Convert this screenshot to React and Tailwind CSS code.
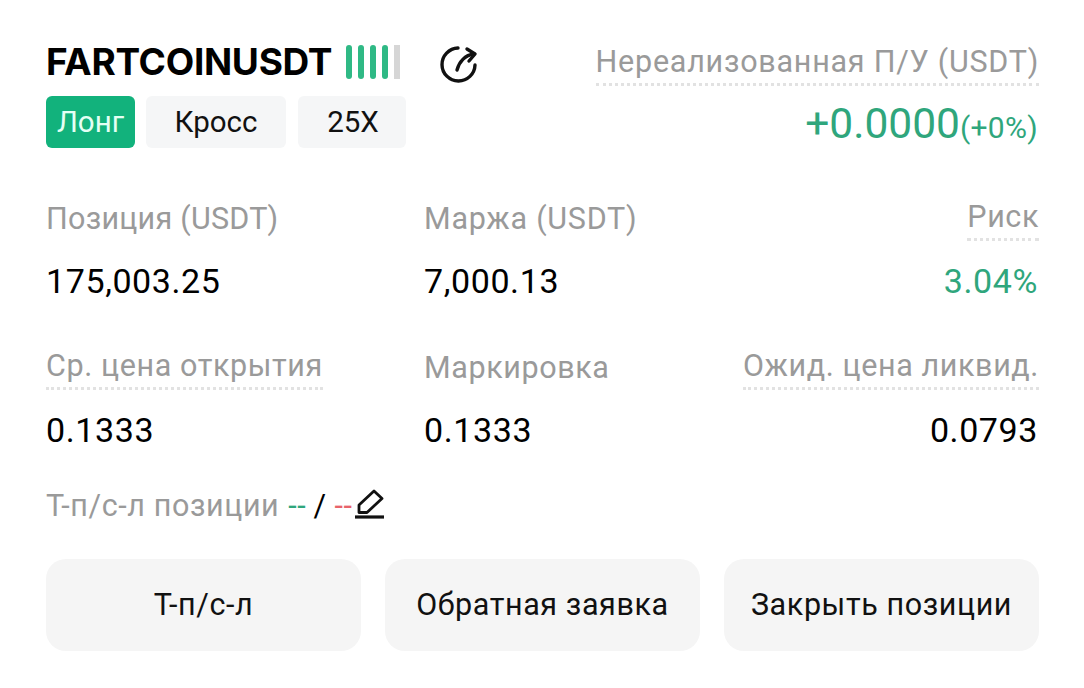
import React from "react";

function Label({ children, dotted, right, tracking = "tracking-[0.6px]" }) {
  return (
    <div className={`flex ${right ? "justify-end" : ""}`}>
      <span className={`h-[44px] text-[30.5px] leading-[40px] text-[#9a9a9a] ${tracking} ${dotted ? "border-b-[3px] border-dotted border-[#e2e2e2]" : "pt-[2px]"}`}>
        {children}
      </span>
    </div>
  );
}

function Stat({ label, value, dotted, right, green, tracking }) {
  return (
    <div className={right ? "text-right" : ""}>
      <Label dotted={dotted} right={right} tracking={tracking}>{label}</Label>
      <div className={`mt-[18px] text-[34px] leading-[44px] tracking-[0.6px] ${right ? "pr-[1px]" : ""} ${green ? "text-[#2fa67c]" : "text-black"}`}>{value}</div>
    </div>
  );
}

function ActionButton({ children }) {
  return (
    <button className="h-[92px] flex-1 rounded-[20px] bg-[#f5f5f5] text-[30.5px] tracking-[0.6px] text-[#111]">
      {children}
    </button>
  );
}

export default function App() {
  return (
    <div className="h-[688px] w-[1084px] overflow-hidden bg-white pl-[46px] pr-[45px] pt-[37px] font-['Roboto',sans-serif]">
      {/* шапка */}
      <div className="flex justify-between">
        <div>
          <div className="flex h-[50px] items-center">
            <span className="font-['Inter',sans-serif] text-[37px] font-bold tracking-[-0.3px] text-black">FARTCOINUSDT</span>
            <div className="ml-[14px] flex gap-[6px]">
              <span className="h-[34px] w-[6px] rounded-full bg-[#2fb985]"></span>
              <span className="h-[34px] w-[6px] rounded-full bg-[#2fb985]"></span>
              <span className="h-[34px] w-[6px] rounded-full bg-[#2fb985]"></span>
              <span className="h-[34px] w-[6px] rounded-full bg-[#2fb985]"></span>
              <span className="h-[34px] w-[6px] bg-[#d6d6d6]"></span>
            </div>
            <svg className="ml-[38px] mt-[2px]" width="40" height="40" viewBox="0 0 40 40" fill="none" stroke="#111" strokeWidth="3.4" strokeLinecap="round" strokeLinejoin="round">
              <path d="M20 5A16.500 16.500 0 1 0 37 22" />
              <path d="M19 27C21 19 27 12 36 11" />
              <path d="M29 6l8 5-6 7" />
            </svg>
          </div>
          <div className="mt-[9px] flex text-[29.5px] leading-[52px]">
            <span className="h-[52px] w-[89px] rounded-[6px] bg-[#12b27c] text-center text-[#e4fff4]">Лонг</span>
            <span className="ml-[11px] h-[52px] w-[140px] rounded-[6px] bg-[#f5f6f7] text-center text-[#111]">Кросс</span>
            <span className="ml-[12px] h-[52px] w-[108px] rounded-[6px] bg-[#f5f6f7] pl-[2px] text-center text-[#111]">25X</span>
          </div>
        </div>
        <div className="pt-[5px]">
          <Label dotted right tracking="tracking-[0.75px]">Нереализованная П/У (USDT)</Label>
          <div className="mt-[13px] flex items-baseline justify-end pr-[1px] text-[#2fa67c]">
            <span className="text-[42.5px] leading-[50px]">+0.0000</span>
            <span className="text-[30px] tracking-[0.3px]">(+0%)</span>
          </div>
        </div>
      </div>

      {/* показатели */}
      <div className="mt-[47px] grid grid-cols-[378px_1fr_auto] gap-y-[43px]">
        <Stat label="Позиция (USDT)" value="175,003.25" tracking="tracking-[0.25px]" />
        <Stat label="Маржа (USDT)" value="7,000.13" tracking="tracking-[0.75px]" />
        <Stat label="Риск" value="3.04%" dotted right green />
        <Stat label="Ср. цена открытия" value="0.1333" dotted />
        <Stat label="Маркировка" value="0.1333" />
        <Stat label="Ожид. цена ликвид." value="0.0793" dotted right />
      </div>

      <div className="mt-[34px] flex h-[40px] items-center text-[30.5px] tracking-[0.6px] text-[#9a9a9a]">
        <span>Т-п/с-л позиции</span>
        <span className="ml-[9px] text-[#2fa67c]">--</span>
        <span className="ml-[7px] text-black">/</span>
        <span className="ml-[8px] text-[#e8636b]">--</span>
        <svg className="ml-[2px] overflow-visible" width="29" height="32" viewBox="0 0 29 32" fill="none" stroke="#111" strokeWidth="2.8" strokeLinejoin="round">
          <path d="M4 15L19 1L27 8.500L12 22.500H4z" />
          <path d="M0 27H29" strokeWidth="3.2" />
        </svg>
      </div>

      <div className="mt-[33px] flex gap-[24px]">
        <ActionButton>Т-п/с-л</ActionButton>
        <ActionButton>Обратная заявка</ActionButton>
        <ActionButton>Закрыть позиции</ActionButton>
      </div>
    </div>
  );
}
